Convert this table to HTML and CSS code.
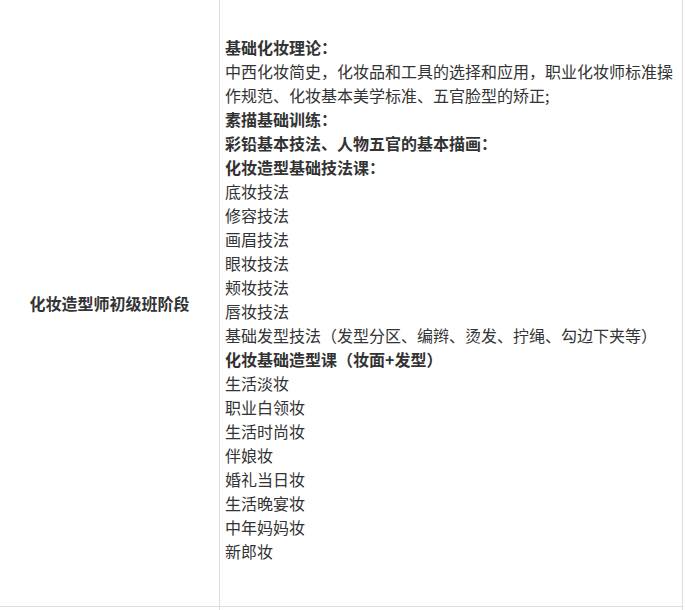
FILE: index.html
```html
<!DOCTYPE html>
<html lang="zh-CN">
<head>
    <meta charset="UTF-8">
    <meta name="viewport" content="width=device-width, initial-scale=1.0">
    <title>化妆造型师初级班阶段</title>
    <link rel="stylesheet" href="styles.css">
</head>
<body>

    <table class="course-table">
        <tr>
            <td class="stage">化妆造型师初级班阶段</td>
            <td class="content">
                <p class="title">基础化妆理论：</p>
                <p>中西化妆简史，化妆品和工具的选择和应用，职业化妆师标准操作规范、化妆基本美学标准、五官脸型的矫正;</p>
                <p class="title">素描基础训练：</p>
                <p class="title">彩铅基本技法、人物五官的基本描画：</p>
                <p class="title">化妆造型基础技法课：</p>
                <p>底妆技法</p>
                <p>修容技法</p>
                <p>画眉技法</p>
                <p>眼妆技法</p>
                <p>颊妆技法</p>
                <p>唇妆技法</p>
                <p>基础发型技法（发型分区、编辫、烫发、拧绳、勾边下夹等）</p>
                <p class="title">化妆基础造型课（妆面+发型）</p>
                <p>生活淡妆</p>
                <p>职业白领妆</p>
                <p>生活时尚妆</p>
                <p>伴娘妆</p>
                <p>婚礼当日妆</p>
                <p>生活晚宴妆</p>
                <p>中年妈妈妆</p>
                <p>新郎妆</p>
            </td>
        </tr>
        <tr>
            <td class="stage"></td>
            <td class="content"></td>
        </tr>
    </table>

</body>
</html>
```

FILE: styles.css
```css
/* ОСНОВА */
* { margin: 0; padding: 0; box-sizing: border-box; }
body {
    font-family: "Noto Sans CJK SC", "Microsoft YaHei", sans-serif;
    font-size: 16px;
    line-height: 24px;
    color: #333;
    background: #fff;
}

/* ТАБЛИЦА КУРСА */
.course-table {
    width: 684px;
    margin: -1px 0 0 -1px;
    border-collapse: collapse;
}

.course-table td { border: 1px solid #ddd; }

.stage {
    width: 220px;
    text-align: center;
    vertical-align: middle;
    font-weight: bold;
}

.content {
    padding: 35px 5px 43px 5px;
    vertical-align: top;
}

.content p { margin: 0; }
.content .title { font-weight: bold; }
```
